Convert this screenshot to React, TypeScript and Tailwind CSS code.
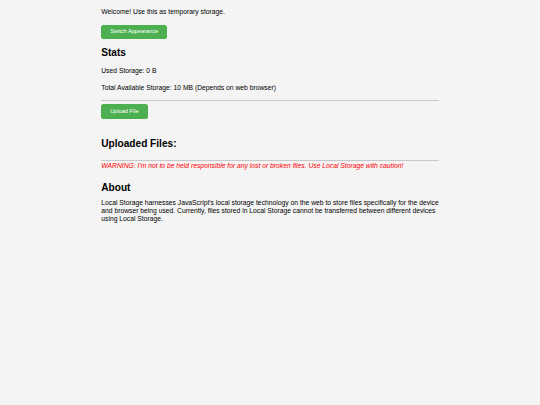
export default function App() {
  return (
    <div className="min-h-screen bg-[#f4f4f4] font-['Liberation_Sans',Arial,sans-serif] text-black">
      <div className="mx-auto flex w-[337.5px] flex-col items-start pt-[8.2px]">
        <p className="text-[6.75px] leading-[7.76px]">Welcome! Use this as temporary storage.</p>
        <button
          type="button"
          className="mt-[8.7px] flex h-[14.6px] items-center rounded-[2.5px] bg-[#4caf50] px-[9px] text-[5.6px] leading-none text-white"
        >
          Switch Appearance
        </button>

        <h2 className="mt-[8.1px] text-[10.125px] font-bold leading-[11.63px]">Stats</h2>
        <p className="mt-[8.2px] text-[6.75px] leading-[7.76px]">Used Storage: 0 B</p>
        <p className="mt-[8.9px] text-[6.75px] leading-[7.76px]">
          Total Available Storage: 10 MB (Depends on web browser)
        </p>
        <div className="mt-[8.6px] h-px w-full bg-[#c8c8c8]" />
        <button
          type="button"
          className="mt-[3.3px] flex h-[14.7px] items-center rounded-[2.5px] bg-[#4caf50] px-[9px] text-[5.6px] leading-none text-white"
        >
          Upload File
        </button>

        <h2 className="mt-[18.8px] text-[10.125px] font-bold leading-[11.63px]">Uploaded Files:</h2>
        <div className="mt-[10px] h-px w-full bg-[#c8c8c8]" />
        <p className="mt-[1.7px] text-[6.75px] italic leading-[7.76px] text-[#f00]">
          WARNING: I&apos;m not to be held responsible for any lost or broken files. Use Local Storage with caution!
        </p>

        <h2 className="mt-[12.3px] text-[10.125px] font-bold leading-[11.63px]">About</h2>
        <p className="mt-[5.5px] w-full text-[6.75px] leading-[7.6px]">
          Local Storage harnesses JavaScript&apos;s local storage technology on the web to store files specifically for the
          device and browser being used. Currently, files stored in Local Storage cannot be transferred between different
          devices using Local Storage.
        </p>
      </div>
    </div>
  );
}
